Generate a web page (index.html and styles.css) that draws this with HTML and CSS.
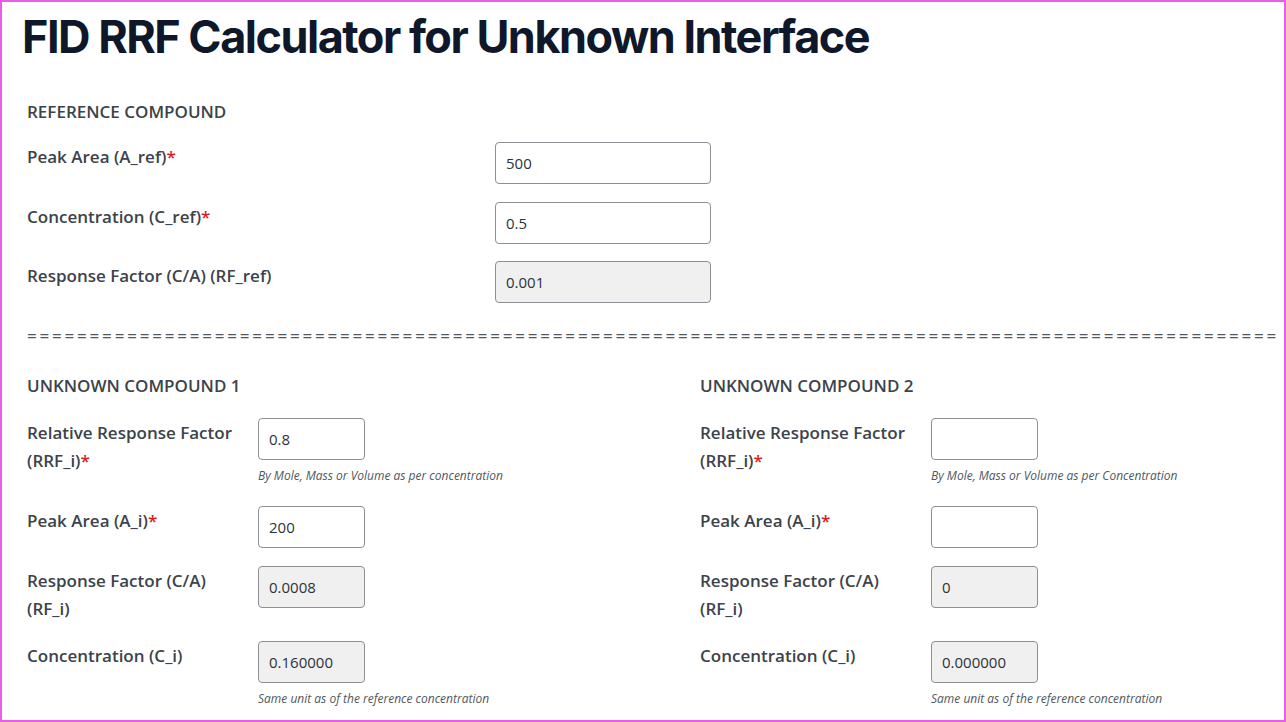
FILE: index.html
```html
<!DOCTYPE html>
<html lang="en">
<head>
<meta charset="utf-8">
<title>FID RRF Calculator for Unknown Interface</title>
<link rel="stylesheet" href="styles.css">
</head>
<body>
<div class="page">
  <h1 class="title">FID RRF Calculator for Unknown Interface</h1>

  <section class="ref">
    <h2 class="sec-head">REFERENCE COMPOUND</h2>
    <div class="ref-grid">
      <label class="lbl">Peak Area (A_ref)<span class="req">*</span></label>
      <input class="field field-wide" type="text" value="500">
      <label class="lbl">Concentration (C_ref)<span class="req">*</span></label>
      <input class="field field-wide" type="text" value="0.5">
      <label class="lbl">Response Factor (C/A) (RF_ref)</label>
      <input class="field field-wide ro" type="text" value="0.001" readonly>
    </div>
  </section>

  <div class="divider">====================================================================================================</div>

  <div class="unknowns">
    <section class="unk">
      <h2 class="sec-head">UNKNOWN COMPOUND 1</h2>
      <div class="unk-row">
        <label class="lbl">Relative Response Factor <span class="nw">(RRF_i)<span class="req">*</span></span></label>
        <div class="ctl">
          <input class="field" type="text" value="0.8">
          <div class="hint">By Mole, Mass or Volume as per concentration</div>
        </div>
      </div>
      <div class="unk-row">
        <label class="lbl">Peak Area (A_i)<span class="req">*</span></label>
        <div class="ctl"><input class="field" type="text" value="200"></div>
      </div>
      <div class="unk-row">
        <label class="lbl">Response Factor (C/A) (RF_i)</label>
        <div class="ctl"><input class="field ro" type="text" value="0.0008" readonly></div>
      </div>
      <div class="unk-row">
        <label class="lbl">Concentration (C_i)</label>
        <div class="ctl">
          <input class="field ro" type="text" value="0.160000" readonly>
          <div class="hint">Same unit as of the reference concentration</div>
        </div>
      </div>
    </section>

    <section class="unk">
      <h2 class="sec-head">UNKNOWN COMPOUND 2</h2>
      <div class="unk-row">
        <label class="lbl">Relative Response Factor <span class="nw">(RRF_i)<span class="req">*</span></span></label>
        <div class="ctl">
          <input class="field" type="text" value="">
          <div class="hint">By Mole, Mass or Volume as per Concentration</div>
        </div>
      </div>
      <div class="unk-row">
        <label class="lbl">Peak Area (A_i)<span class="req">*</span></label>
        <div class="ctl"><input class="field" type="text" value=""></div>
      </div>
      <div class="unk-row">
        <label class="lbl">Response Factor (C/A) (RF_i)</label>
        <div class="ctl"><input class="field ro" type="text" value="0" readonly></div>
      </div>
      <div class="unk-row">
        <label class="lbl">Concentration (C_i)</label>
        <div class="ctl">
          <input class="field ro" type="text" value="0.000000" readonly>
          <div class="hint">Same unit as of the reference concentration</div>
        </div>
      </div>
    </section>
  </div>
</div>
</body>
</html>
```

FILE: styles.css
```css
html, body {
  margin: 0;
  padding: 0;
  background: #ffffff;
}

.page {
  box-sizing: border-box;
  width: 1286px;
  height: 722px;
  border: 2px solid #e95ee9;
  padding: 7px 0 0 25px;
  overflow: hidden;
  font-family: "Open Sans", "Noto Sans", sans-serif;
  color: #3c434a;
}

.title {
  margin: 0 0 0 -5px;
  font-family: Inter, "Liberation Sans", sans-serif;
  font-weight: 700;
  font-size: 45px;
  line-height: 56px;
  letter-spacing: -1.5px;
  color: #0f172a;
}

.sec-head {
  margin: 33px 0 0 0;
  font-size: 17px;
  font-weight: 560;
  line-height: 28px;
  color: #3c434a;
}

.ref-grid {
  margin-top: 16px;
  display: grid;
  grid-template-columns: 468px 216px;
  row-gap: 17.5px;
}

.ref-grid .lbl {
  margin-top: 1px;
}

.lbl {
  font-size: 17px;
  font-weight: 560;
  line-height: 28px;
  color: #3c434a;
}

.nw {
  display: inline-block;
}

.req {
  color: #e01b1b;
}

.field {
  box-sizing: border-box;
  display: block;
  width: 107px;
  height: 42px;
  margin: 0;
  padding: 0 10px;
  border: 1px solid #8c8f94;
  border-radius: 4px;
  background: #ffffff;
  font-family: "Open Sans", "Noto Sans", sans-serif;
  font-size: 15px;
  color: #2c3338;
  outline: none;
}

.field-wide {
  width: 216px;
}

.field.ro {
  background: #f0f0f0;
}

.divider {
  margin-top: 19px;
  font-size: 17px;
  line-height: 28px;
  letter-spacing: 2.8px;
  white-space: nowrap;
  color: #50575e;
}

.unknowns {
  margin-top: 22px;
  display: grid;
  grid-template-columns: 673px 1fr;
}

.unk .sec-head {
  margin-top: 0;
}

.unk-row {
  display: grid;
  grid-template-columns: 231px 1fr;
  margin-top: 18px;
}

.unk-row .lbl {
  width: 215px;
  margin-top: 1px;
}

.hint {
  margin: 7px 0 3px 0;
  font-size: 12px;
  font-style: italic;
  line-height: 18px;
  color: #50575e;
  white-space: nowrap;
}
```
